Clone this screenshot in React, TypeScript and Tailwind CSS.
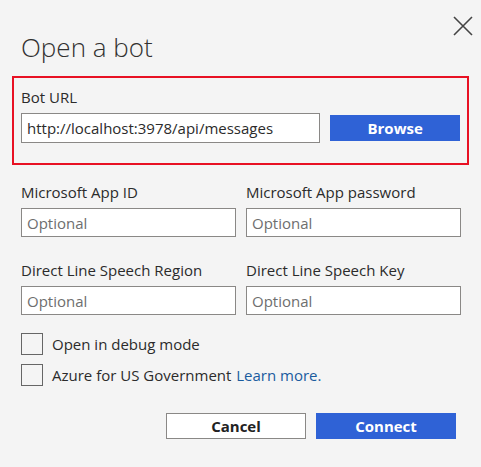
import { useState } from 'react';

const font = { fontFamily: '"Open Sans", "Noto Sans", sans-serif' };

function Field({ label }: { label: string }) {
  return (
    <div className="flex flex-col">
      <label className="text-[15px] leading-[20px] text-[#2b2b2b] whitespace-nowrap">{label}</label>
      <input
        placeholder="Optional"
        className="mt-[6px] h-[29px] w-[215px] border border-[#8a8886] bg-white px-[5px] text-[15px] text-[#2b2b2b] placeholder:text-[#6e6e6e] outline-none"
      />
    </div>
  );
}

function Check({ children }: { children: React.ReactNode }) {
  const [on, setOn] = useState(false);
  return (
    <label className="flex items-center h-[22px] cursor-pointer">
      <button
        onClick={() => setOn(!on)}
        className="w-[22px] h-[22px] shrink-0 border border-[#666] bg-transparent flex items-center justify-center"
      >
        {on && <span className="text-[14px] leading-none text-[#333]">✓</span>}
      </button>
      <span className="ml-[9px] text-[15px] leading-[20px] text-[#2b2b2b] whitespace-nowrap">{children}</span>
    </label>
  );
}

export default function App() {
  return (
    <div className="relative w-[481px] h-[467px] bg-[#f4f4f4] overflow-hidden" style={font}>
      {/* close */}
      <button className="absolute top-[16px] left-[453px] w-[20px] h-[20px]">
        <svg width="20" height="20" viewBox="0 0 20 20">
          <path d="M1 1 L19 19 M19 1 L1 19" stroke="#444" strokeWidth="1.6" />
        </svg>
      </button>

      <h1 className="pt-[30px] pl-[21px] text-[26px] leading-[34px] font-light text-[#323130]">Open a bot</h1>

      {/* bot url */}
      <div className="mx-[12px] mt-[12px] h-[89px] border-2 border-[#e81123] px-[7px] pt-[9px]">
        <div className="text-[15px] leading-[20px] text-[#2b2b2b]">Bot URL</div>
        <div className="mt-[6px] flex items-start">
          <input
            defaultValue="http://localhost:3978/api/messages"
            className="h-[30px] w-[300px] border border-[#8a8886] bg-white px-[5px] text-[15px] text-[#2b2b2b] outline-none"
          />
          <button className="ml-[10px] mt-[2px] h-[26px] w-[130px] bg-[#2f62d6] text-white text-[15px] leading-[20px] font-bold">
            Browse
          </button>
        </div>
      </div>

      {/* optional fields */}
      <div className="px-[21px] pt-[17px] grid grid-cols-[215px_215px] gap-x-[10px] gap-y-[23px]">
        <Field label="Microsoft App ID" />
        <Field label="Microsoft App password" />
        <Field label="Direct Line Speech Region" />
        <Field label="Direct Line Speech Key" />
      </div>

      {/* checkboxes */}
      <div className="px-[21px] pt-[18px] flex flex-col gap-[9px]">
        <Check>Open in debug mode</Check>
        <Check>
          Azure for US Government{' '}
          <a href="#" className="ml-[1px] text-[#1a5b9e]">Learn more.</a>
        </Check>
      </div>

      {/* actions */}
      <div className="mt-[27px] pr-[25px] flex justify-end gap-[10px]">
        <button className="h-[26px] w-[140px] border border-[#8a8886] bg-white text-[15px] leading-[20px] font-bold text-[#222]">
          Cancel
        </button>
        <button className="h-[26px] w-[140px] bg-[#2f62d6] text-white text-[15px] leading-[20px] font-bold">
          Connect
        </button>
      </div>
    </div>
  );
}
